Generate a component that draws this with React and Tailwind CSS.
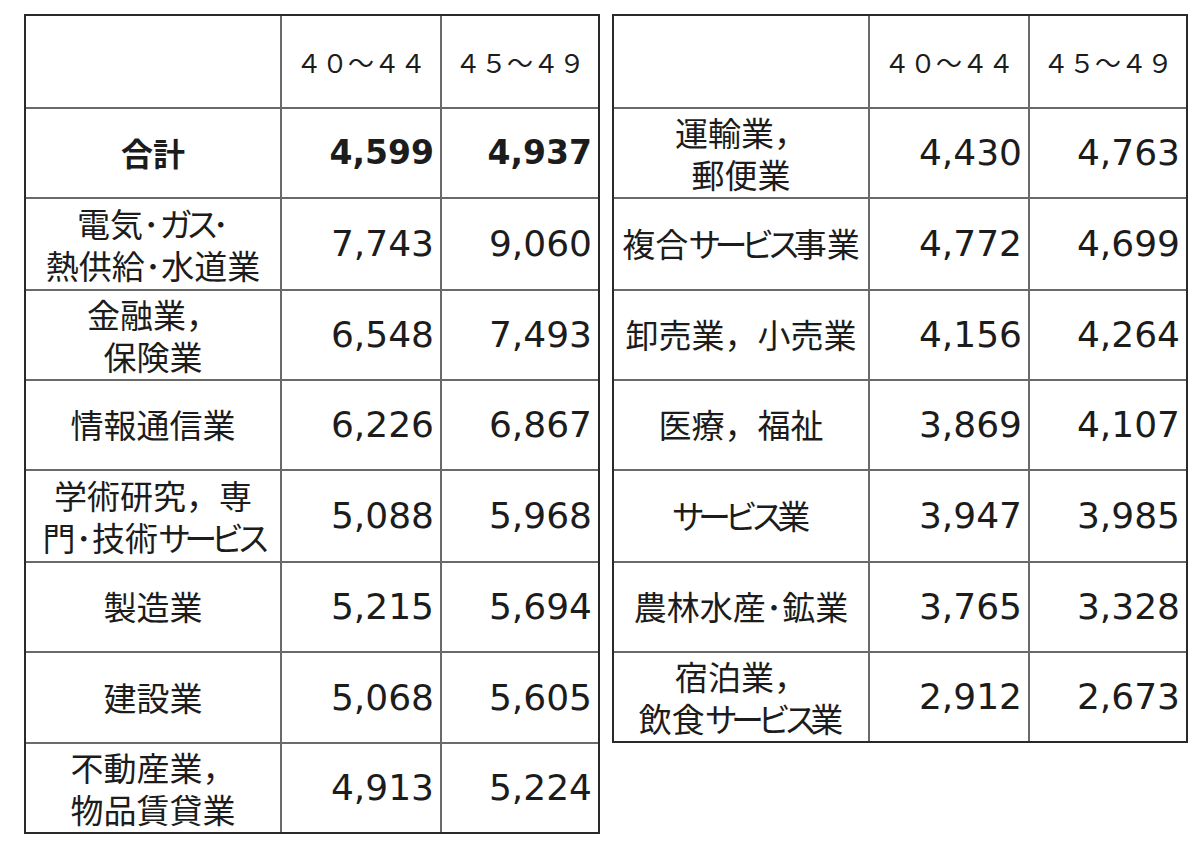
import React from 'react'

const K = ({ children }) => <span className="tracking-[-0.2em]">{children}</span>

const leftRows = [
  { h: 90, label: [<span key="a" className="font-bold text-[32px]">合計</span>], a: '4,599', b: '4,937', bold: true },
  { h: 92, label: [<>電気･<K>ガス</K>･</>, <>熱供給･水道業</>], a: '7,743', b: '9,060' },
  { h: 90, label: [<>金融業，</>, <>保険業</>], a: '6,548', b: '7,493' },
  { h: 90, label: [<>情報通信業</>], a: '6,226', b: '6,867' },
  { h: 92, label: [<>学術研究，専</>, <>門･技術<K>サービス</K></>], a: '5,088', b: '5,968' },
  { h: 90, label: [<>製造業</>], a: '5,215', b: '5,694' },
  { h: 91, label: [<>建設業</>], a: '5,068', b: '5,605' },
  { h: 90, label: [<>不動産業，</>, <>物品賃貸業</>], a: '4,913', b: '5,224' },
]

const rightRows = [
  { h: 90, label: [<>運輸業，</>, <>郵便業</>], a: '4,430', b: '4,763' },
  { h: 92, label: [<>複合<K>サービス</K>事業</>], a: '4,772', b: '4,699' },
  { h: 90, label: [<>卸売業，小売業</>], a: '4,156', b: '4,264' },
  { h: 90, label: [<>医療，福祉</>], a: '3,869', b: '4,107' },
  { h: 92, label: [<><K>サービス</K>業</>], a: '3,947', b: '3,985' },
  { h: 90, label: [<>農林水産･鉱業</>], a: '3,765', b: '3,328' },
  { h: 90, label: [<>宿泊業，</>, <>飲食<K>サービス</K>業</>], a: '2,912', b: '2,673' },
]

const jp = "font-['Noto_Sans_CJK_JP',sans-serif]"
const num = "font-['DejaVu_Sans','Noto_Sans_CJK_JP',sans-serif]"

const Row = ({ row }) => (
  <div
    className="grid grid-cols-[254px_160px_158px] border-t-2 border-[#6a6a6a]"
    style={{ height: row.h }}
  >
    <div className={`${jp} flex flex-col items-center justify-center text-center text-[33px] whitespace-nowrap text-[#1c1c1c]`}>
      {row.label.map((line, i) => (
        <div key={i} className={row.label.length > 1 ? 'leading-[42px]' : 'leading-normal'}>
          {line}
        </div>
      ))}
    </div>
    <div
      className={`${num} flex items-center justify-end pr-[6px] border-l-2 border-[#6a6a6a] text-[#1c1c1c] ${row.bold ? 'font-bold text-[33px]' : 'text-[36px]'}`}
    >
      {row.a}
    </div>
    <div
      className={`${num} flex items-center justify-end pr-[6px] border-l-2 border-[#6a6a6a] text-[#1c1c1c] ${row.bold ? 'font-bold text-[33px]' : 'text-[36px]'}`}
    >
      {row.b}
    </div>
  </div>
)

const Table = ({ rows }) => (
  <div className="w-[576px] border-2 border-[#2a2a2a] bg-white">
    <div className="grid grid-cols-[254px_160px_158px] h-[91px]">
      <div />
      <div className={`${jp} flex items-center justify-center border-l-2 border-[#6a6a6a] text-[26px] text-[#1c1c1c]`}>
        ４０～４４
      </div>
      <div className={`${jp} flex items-center justify-center border-l-2 border-[#6a6a6a] text-[26px] text-[#1c1c1c]`}>
        ４５～４９
      </div>
    </div>
    {rows.map((row, i) => (
      <Row key={i} row={row} />
    ))}
  </div>
)

export default function App() {
  return (
    <div className="w-[1200px] h-[858px] bg-white pt-[14px] pl-[24px] flex items-start gap-[12px]">
      <Table rows={leftRows} />
      <Table rows={rightRows} />
    </div>
  )
}
